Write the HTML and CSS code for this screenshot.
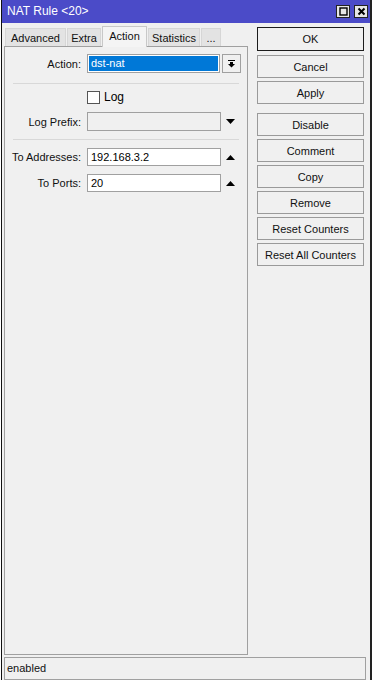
FILE: index.html
```html
<!DOCTYPE html>
<html lang="en">
<head>
    <meta charset="UTF-8">
    <meta name="viewport" content="width=device-width, initial-scale=1.0">
    <title>NAT Rule &lt;20&gt;</title>
    <link rel="stylesheet" href="styles.css">
</head>
<body>
    <div class="window">
        <div class="titlebar">
            <span class="title">NAT Rule &lt;20&gt;</span>
            <div class="title-buttons">
                <span class="tbtn">
                    <svg width="9" height="9" viewBox="0 0 9 9"><rect x="1" y="1" width="7" height="7" fill="none" stroke="#000" stroke-width="1.4"/></svg>
                </span>
                <span class="tbtn">
                    <svg width="9" height="9" viewBox="0 0 9 9"><path d="M1.5 1.5 L7.5 7.5 M7.5 1.5 L1.5 7.5" stroke="#000" stroke-width="2"/></svg>
                </span>
            </div>
        </div>
        <div class="main">
            <div class="left">
                <div class="tabs">
                    <div class="tab tab-advanced">Advanced</div>
                    <div class="tab tab-extra">Extra</div>
                    <div class="tab active tab-action">Action</div>
                    <div class="tab tab-stats">Statistics</div>
                    <div class="tab tab-more">...</div>
                </div>
                <div class="panel">
                    <div class="row row-action">
                        <label class="label">Action:</label>
                        <div class="field select">dst-nat</div>
                        <div class="drop-btn">
                            <svg width="7" height="8" viewBox="0 0 7 8"><rect x="0" y="0" width="7" height="1" fill="#000"/><rect x="2" y="2" width="3" height="2" fill="#000"/><path d="M0 4 H7 L3.5 7.5 Z" fill="#000"/></svg>
                        </div>
                    </div>
                    <div class="sep"></div>
                    <div class="row row-log">
                        <span class="label"></span>
                        <span class="checkbox"></span>
                        <span class="check-text">Log</span>
                    </div>
                    <div class="row row-prefix">
                        <label class="label">Log Prefix:</label>
                        <div class="field disabled"></div>
                        <svg class="arrow" width="9" height="5" viewBox="0 0 9 5"><path d="M0 0 H9 L4.5 5 Z" fill="#000"/></svg>
                    </div>
                    <div class="sep sep-2"></div>
                    <div class="row row-addr">
                        <label class="label">To Addresses:</label>
                        <div class="field">192.168.3.2</div>
                        <svg class="arrow" width="9" height="5" viewBox="0 0 9 5"><path d="M0 5 H9 L4.5 0 Z" fill="#000"/></svg>
                    </div>
                    <div class="row row-ports">
                        <label class="label">To Ports:</label>
                        <div class="field">20</div>
                        <svg class="arrow" width="9" height="5" viewBox="0 0 9 5"><path d="M0 5 H9 L4.5 0 Z" fill="#000"/></svg>
                    </div>
                </div>
            </div>
            <div class="buttons">
                <button class="btn default">OK</button>
                <button class="btn">Cancel</button>
                <button class="btn">Apply</button>
                <button class="btn group-start">Disable</button>
                <button class="btn">Comment</button>
                <button class="btn">Copy</button>
                <button class="btn">Remove</button>
                <button class="btn">Reset Counters</button>
                <button class="btn">Reset All Counters</button>
            </div>
        </div>
        <div class="statusbar">enabled</div>
    </div>
</body>
</html>
```

FILE: styles.css
```css
body {
    margin: 0;
    padding: 0;
    background-color: #fff;
    font-family: 'Liberation Sans', Arial, sans-serif;
    font-size: 11px;
    color: #000;
}
.window {
    margin-left: 1px;
    width: 371px;
    height: 680px;
    background-color: #f0f0f0;
    border-left: 1px solid #111;
    border-right: 2px solid #222;
    box-sizing: border-box;
    display: flex;
    flex-direction: column;
}
.titlebar {
    height: 23px;
    background-color: #4b4bc8;
    color: #fff;
    display: flex;
    align-items: center;
    justify-content: space-between;
    padding-left: 5px;
    flex-shrink: 0;
}
.title {
    font-size: 12px;
    margin-top: -1px;
}
.title-buttons {
    display: flex;
    gap: 4px;
    margin-right: 2px;
}
.tbtn {
    width: 14px;
    height: 13px;
    background-color: #e6e6e6;
    border: 1px solid #222;
    box-sizing: border-box;
    display: flex;
    align-items: center;
    justify-content: center;
}
.main {
    height: 632px;
    display: flex;
    padding: 3px 0 0 2px;
    box-sizing: border-box;
    flex-shrink: 0;
}
.left {
    width: 244px;
    display: flex;
    flex-direction: column;
}
.tabs {
    display: flex;
    align-items: flex-end;
    height: 20px;
    padding-left: 1px;
    gap: 1px;
    position: relative;
    z-index: 1;
}
.tab {
    height: 18px;
    line-height: 18px;
    background-color: #e3e3e3;
    border: 1px solid #d6d6d6;
    border-bottom: none;
    box-sizing: border-box;
    text-align: center;
    color: #111;
}
.tab.active {
    height: 21px;
    line-height: 18px;
    background-color: #f4f4f4;
    border-color: #c8c8c8;
    margin-bottom: -1px;
}
.tab-advanced { width: 61px; }
.tab-extra { width: 34px; }
.tab-action { width: 45px; }
.tab-stats { width: 52px; }
.tab-more { width: 20px; }
.panel {
    flex: 1;
    border: 1px solid #a0a0a0;
    padding-top: 7px;
}
.row {
    display: flex;
    align-items: center;
    height: 18px;
}
.label {
    width: 76px;
    text-align: right;
    margin-right: 6px;
    flex-shrink: 0;
    color: #111;
}
.field {
    width: 134px;
    height: 18px;
    background-color: #fff;
    border: 1px solid #a0a0a0;
    box-sizing: border-box;
    padding-left: 3px;
    line-height: 16px;
}
.field.select {
    width: 133px;
    height: 19px;
    background-color: #0078d7;
    color: #fff;
    box-shadow: inset 0 0 0 1px #fff;
    line-height: 17px;
}
.field.disabled {
    background-color: #f0f0f0;
    height: 19px;
}
.drop-btn {
    width: 19px;
    height: 19px;
    margin-left: 2px;
    border: 1px solid #a0a0a0;
    box-sizing: border-box;
    background-color: #f0f0f0;
    display: flex;
    align-items: center;
    justify-content: center;
}
.arrow {
    margin-left: 5px;
}
.row-action { height: 19px; }
.sep {
    height: 1px;
    margin: 10px 8px 0 8px;
    background-color: #d8d8d8;
}
.row-log {
    height: 20px;
    margin-top: 3px;
}
.checkbox {
    width: 13px;
    height: 13px;
    background-color: #fff;
    border: 1px solid #555;
    box-sizing: border-box;
}
.check-text {
    margin-left: 4px;
    font-size: 12px;
}
.row-prefix {
    height: 19px;
    margin-top: 5px;
}
.sep-2 { margin-top: 8px; }
.row-addr { margin-top: 8px; }
.row-ports { margin-top: 8px; }
.buttons {
    margin-left: 9px;
    width: 107px;
    display: flex;
    flex-direction: column;
}
.btn {
    height: 23px;
    margin-top: 3px;
    padding: 0;
    font-family: 'Liberation Sans', Arial, sans-serif;
    font-size: 11px;
    color: #111;
    background-color: #f0f0f0;
    border: 1px solid #9a9a9a;
    box-sizing: border-box;
}
.btn.default {
    height: 24px;
    margin-top: 1px;
    margin-bottom: 1px;
    border-color: #1c1c1c;
}
.btn.group-start {
    margin-top: 9px;
}
.statusbar {
    margin: 2px 4px 0 2px;
    height: 23px;
    border: 1px solid #a0a0a0;
    box-sizing: border-box;
    padding-left: 2px;
    line-height: 20px;
    color: #111;
}
```
